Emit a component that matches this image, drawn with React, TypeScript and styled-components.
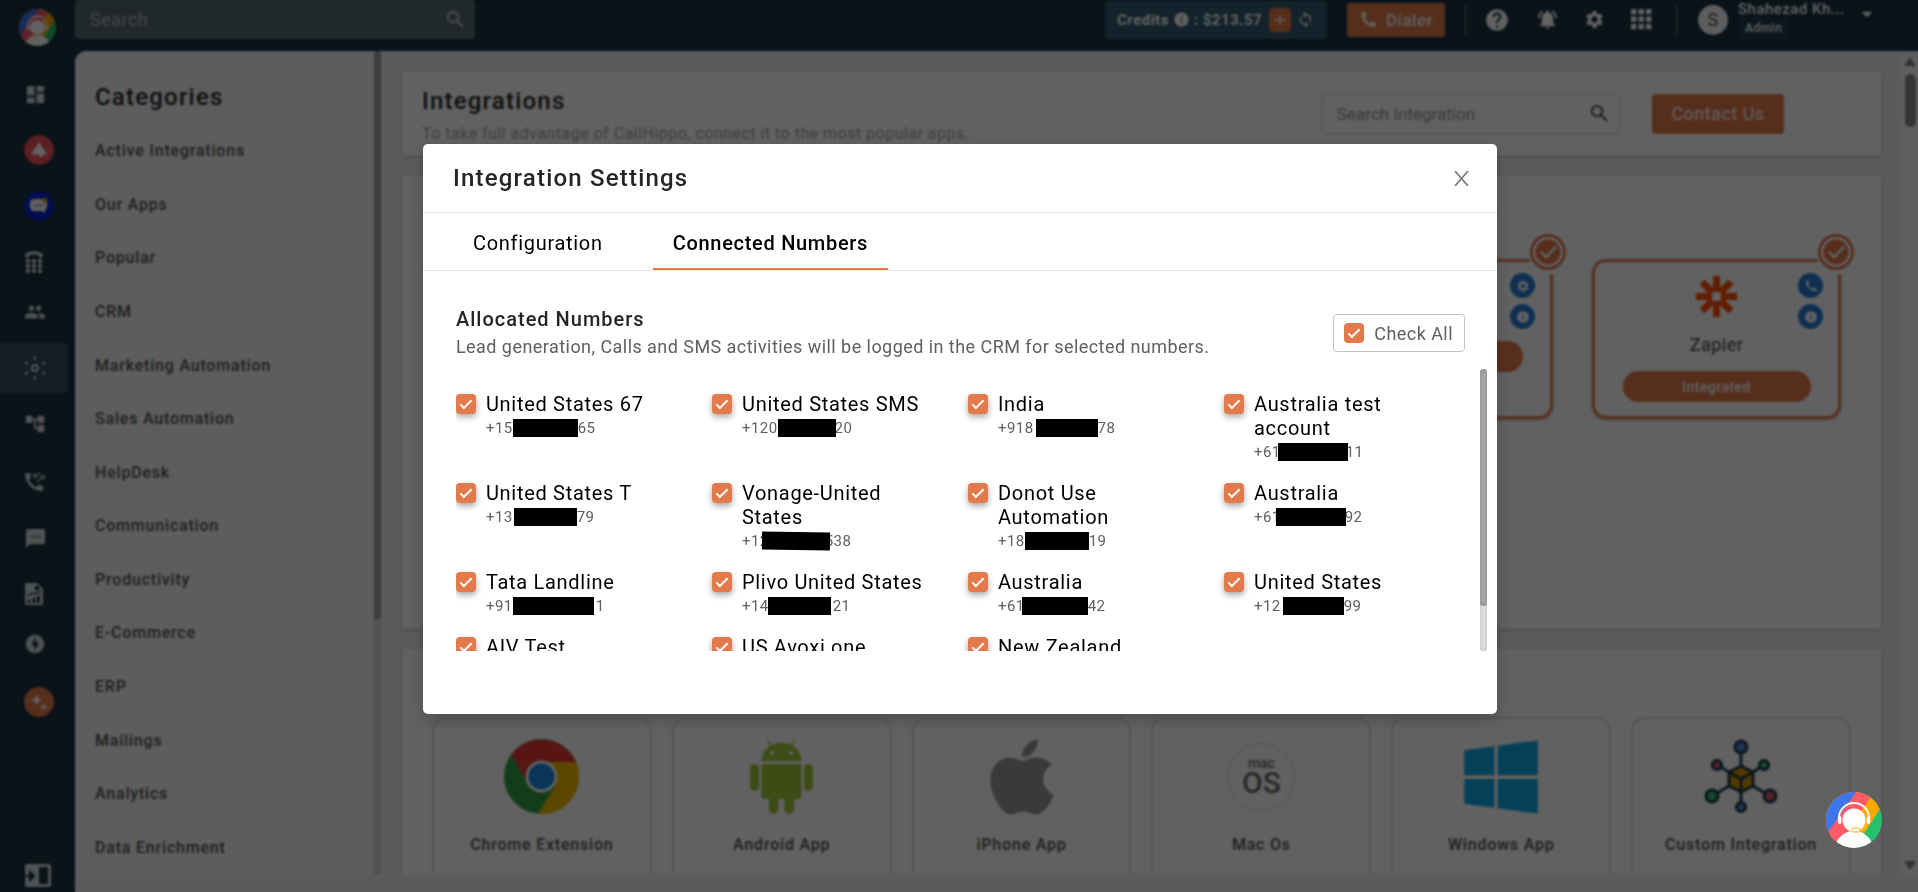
import React from "react";
import styled, { createGlobalStyle, css } from "styled-components";
import {
  MdAccountTree,
  MdAdd,
  MdArrowDropDown,
  MdCall,
  MdDashboard,
  MdGroup,
  MdHelp,
  MdInfo,
  MdLoop,
  MdNotificationsActive,
  MdOfflineBolt,
  MdSearch,
  MdSettings,
  MdSms,
} from "react-icons/md";
import { FaApple, FaWindows } from "react-icons/fa";

const color = {
  navy: "#1a323f",
  orange: "#e37a4b",
  line: "#e5e5e5",
  ink: "#252525",
  muted: "#5f5f5f",
};

const tracking = { body: "0.03em", wide: "0.05em" };

const GlobalStyle = createGlobalStyle`
  *, *::before, *::after { box-sizing: border-box; }
  body {
    margin: 0;
    overflow: hidden;
    background: ${color.navy};
    font-family: Roboto, "Liberation Sans", sans-serif;
    letter-spacing: ${tracking.body};
  }
  button, input { font: inherit; letter-spacing: inherit; }
  h1, h2, h3, p, ul { margin: 0; padding: 0; }
  a { color: inherit; text-decoration: none; }
`;

/* ---------- Page shell ---------- */

const Shell = styled.div`
  display: flex;
  height: 100vh;
  overflow: hidden;
  background: ${color.navy};
`;

const Rail = styled.nav`
  display: flex;
  flex-direction: column;
  flex: 0 0 75px;
  padding: 9px 0 4px;
  color: #d4d8da;
`;

const RailLogo = styled.a`
  display: flex;
  height: 60px;
  padding-left: 19px;
`;

const RailLink = styled.a<{ $gap?: number; $active?: boolean }>`
  display: flex;
  align-items: center;
  flex: 0 0 50px;
  width: 68px;
  margin-top: ${(p) => p.$gap ?? 6}px;
  padding-left: 24px;
  background: ${(p) => (p.$active ? "#374f63" : "transparent")};
`;

const RailDisc = styled.span<{ $fill: string }>`
  display: flex;
  align-items: center;
  justify-content: center;
  width: 30px;
  height: 30px;
  border-radius: 50%;
  background: ${(p) => p.$fill};
  color: #fff;
`;

const RailToggle = styled.button`
  display: flex;
  margin-top: auto;
  padding: 0 0 0 24px;
  border: 0;
  background: none;
`;

const Workspace = styled.div`
  display: flex;
  flex-direction: column;
  flex: 1;
  min-width: 0;
`;

/* ---------- Top bar ---------- */

const TopBar = styled.header`
  display: flex;
  align-items: center;
  flex: 0 0 51px;
  padding: 0 38px 12px 0;
  color: #fff;
`;

const SearchField = styled.label<{ $light?: boolean }>`
  display: flex;
  align-items: center;
  justify-content: space-between;
  border-radius: 4px;
  ${(p) =>
    p.$light
      ? css`
          width: 298px;
          height: 40px;
          padding: 0 8px 0 14px;
          border: 1px solid #d9d9d9;
          background: #fff;
          color: #444;
          font-size: 17px;
          letter-spacing: 0;
        `
      : css`
          width: 400px;
          height: 39px;
          padding: 0 8px 0 15px;
          background: #586a72;
          color: #d0d4d6;
          font-size: 18px;
        `}
  input {
    flex: 1;
    min-width: 0;
    padding: 0;
    border: 0;
    outline: 0;
    background: none;
    color: inherit;
  }
  input::placeholder {
    color: ${(p) => (p.$light ? "#999" : "#b4bcc0")};
    opacity: 1;
  }
`;

const Credits = styled.div`
  display: flex;
  align-items: center;
  gap: 4px;
  width: 222px;
  height: 38px;
  margin-left: auto;
  padding: 0 12px;
  border-radius: 4px;
  background: #325971;
  font-size: 15px;
  font-weight: 700;
  white-space: nowrap;
`;

const CreditAction = styled.button<{ $filled?: boolean }>`
  display: flex;
  align-items: center;
  justify-content: center;
  width: ${(p) => (p.$filled ? 22 : 20)}px;
  height: 24px;
  margin-left: ${(p) => (p.$filled ? "auto" : "0")};
  padding: 0;
  border: 0;
  border-radius: 4px;
  background: ${(p) => (p.$filled ? color.orange : "none")};
  color: #fff;
`;

const PrimaryButton = styled.button<{ $large?: boolean }>`
  display: flex;
  align-items: center;
  justify-content: center;
  gap: 8px;
  width: ${(p) => (p.$large ? 132 : 98)}px;
  height: ${(p) => (p.$large ? 40 : 34)}px;
  padding: 0;
  border: 0;
  border-radius: 4px;
  background: ${color.orange};
  color: #fff;
  font-size: ${(p) => (p.$large ? 18 : 17)}px;
  font-weight: ${(p) => (p.$large ? 400 : 500)};
`;

const TopActions = styled.div`
  display: flex;
  align-items: center;
  margin-left: 20px;
`;

const TopDivider = styled.span`
  width: 1px;
  height: 29px;
  background: #7e8b92;
`;

const TopIcons = styled.div`
  display: flex;
  align-items: center;
  justify-content: space-between;
  width: 168px;
  margin: 0 24px 0 18px;
`;

const IconButton = styled.button`
  display: flex;
  padding: 0;
  border: 0;
  background: none;
  color: inherit;
`;

const Avatar = styled.span`
  display: flex;
  align-items: center;
  justify-content: center;
  width: 30px;
  height: 30px;
  margin: 0 10px 0 21px;
  border-radius: 50%;
  background: #f5f5f5;
  color: #555;
  font-size: 18px;
`;

const UserBlock = styled.div`
  display: flex;
  flex-direction: column;
  align-items: flex-start;
  width: 116px;
  font-size: 15px;
  font-weight: 500;
  line-height: 16px;
`;

const Role = styled.span`
  padding: 3px 7px;
  border-radius: 4px;
  background: #223c49;
  font-size: 12px;
`;

const UserCaret = styled.span`
  display: flex;
  align-self: flex-start;
`;

/* ---------- Body ---------- */

const Body = styled.div`
  display: flex;
  flex: 1;
  min-height: 0;
  border-bottom: 18px solid #f0f0f3;
  border-top-left-radius: 12px;
  background: #f0f0f0;
  overflow: hidden;
`;

const Categories = styled.aside`
  display: flex;
  flex-direction: column;
  flex: 0 0 299px;
  padding: 28px 0 0 20px;
  background: #f5f5f5;
`;

const PanelTitle = styled.h2`
  color: ${color.ink};
  font-size: 24px;
  font-weight: 500;
  line-height: 36px;
  letter-spacing: ${tracking.wide};
`;

const CategoryList = styled.ul`
  display: flex;
  flex: 1;
  flex-direction: column;
  margin-top: 9px;
  list-style: none;
  color: #505050;
  font-size: 16px;
  font-weight: 500;
  letter-spacing: ${tracking.wide};
`;

const CategoryItem = styled.li`
  display: flex;
  flex: 1;
  align-items: center;
`;

const ScrollRail = styled.div<{ $dark?: boolean }>`
  flex: 0 0 7px;
  border-radius: 4px;
  background: ${(p) => (p.$dark ? "#d8d8d8" : "#dedede")};
  box-shadow: inset 0 0 3px #b8b8b8;
`;

const ScrollThumb = styled.div<{ $share: number }>`
  height: ${(p) => p.$share}%;
  border-radius: 4px;
  background: #ababab;
  box-shadow: inset 0 0 4px #808080;
`;

const Main = styled.main`
  display: flex;
  flex: 1;
  flex-direction: column;
  gap: 20px;
  min-width: 0;
  padding: 20px 19px 0 21px;
  overflow: hidden;
`;

const Card = styled.section`
  flex: none;
  background: #fff;
  box-shadow: 0 1px 4px #bbb;
`;

const IntroCard = styled(Card)`
  display: flex;
  align-items: center;
  height: 85px;
  padding: 0 97px 0 20px;
`;

const Intro = styled.div`
  flex: 1;
  padding-top: 4px;
  color: #a5a5a5;
  font-size: 16px;
  line-height: 30px;
`;

const IntroActions = styled.div`
  display: flex;
  gap: 32px;
`;

const ActiveCard = styled(Card)`
  display: flex;
  justify-content: flex-end;
  gap: 39px;
  height: 453px;
  padding: 83px 40px 0;
`;

const ActiveApp = styled.article`
  position: relative;
  display: flex;
  flex-direction: column;
  align-items: center;
  flex: 0 0 249px;
  height: 160px;
  padding-top: 14px;
  border: 3px solid ${color.orange};
  border-radius: 14px;
  color: #454545;
  font-size: 18px;
  line-height: 30px;
  box-shadow: 0 1px 3px #aaa;
`;

const AppGlyph = styled.span`
  display: flex;
  height: 41px;
  margin-bottom: 13px;
`;

const IntegratedButton = styled.button`
  width: 188px;
  height: 31px;
  margin-top: 11px;
  padding: 0;
  border: 0;
  border-radius: 16px;
  background: ${color.orange};
  color: #fff;
  font-size: 14px;
  font-weight: 500;
`;

const CheckBadge = styled.span`
  position: absolute;
  top: -28px;
  right: -16px;
  display: flex;
  padding: 0 0 5px 1px;
  border-radius: 50%;
  background: #fff;
`;

const RoundActions = styled.span`
  position: absolute;
  top: 11px;
  right: 15px;
  display: grid;
  gap: 6px;
`;

const RoundAction = styled.button`
  display: flex;
  align-items: center;
  justify-content: center;
  width: 25px;
  height: 25px;
  padding: 0;
  border: 0;
  border-radius: 50%;
  background: #257dd8;
  color: #fff;
`;

const AppsCard = styled(Card)`
  flex: 1;
  display: grid;
  grid-template-columns: repeat(6, 1fr);
  gap: 20px;
  padding: 68px 30px 0;
`;

const AppTile = styled.article`
  display: flex;
  flex-direction: column;
  align-items: center;
  height: 180px;
  padding-top: 20px;
  border: 2px solid #dcdcdc;
  border-radius: 14px;
  color: #505050;
  font-size: 16px;
  font-weight: 500;
  line-height: 22px;
  letter-spacing: ${tracking.wide};
`;

const TileGlyph = styled.span`
  display: flex;
  align-items: center;
  justify-content: center;
  height: 75px;
  margin-bottom: 20px;
`;

const MacBadge = styled.span`
  display: flex;
  flex-direction: column;
  align-items: center;
  justify-content: center;
  width: 68px;
  height: 68px;
  border: 1px solid #d2d2d2;
  border-radius: 50%;
  color: #6a6a6a;
  font-size: 14px;
  font-weight: 500;
  line-height: 12px;
  letter-spacing: 0;
`;

const MacBadgeLarge = styled.span`
  font-size: 30px;
  line-height: 27px;
`;

const PageScroll = styled.div`
  display: flex;
  flex-direction: column;
  align-items: center;
  flex: 0 0 18px;
  padding: 6px 0 4px 2px;
  background: #f8f8f8;
`;

const PageThumb = styled.span`
  width: 11px;
  height: 53px;
  margin: 8px 0 auto;
  border-radius: 6px;
  background: #8b8b8b;
`;

/* ---------- Dialog ---------- */

const Overlay = styled.div`
  position: fixed;
  inset: 0;
  display: flex;
  align-items: flex-start;
  justify-content: center;
  padding: 144px 0 0 2px;
  background: rgba(0, 0, 0, 0.62);
  backdrop-filter: blur(1px);
`;

const Dialog = styled.section`
  width: 56vw;
  padding-bottom: 63px;
  border-radius: 5px;
  background: #fff;
  box-shadow: 0 6px 16px rgba(0, 0, 0, 0.2);
`;

const DialogHeader = styled.div`
  display: flex;
  align-items: center;
  justify-content: space-between;
  height: 69px;
  padding: 0 28px 0 30px;
  border-bottom: 1px solid ${color.line};
`;

const TabList = styled.div`
  display: flex;
  gap: 30px;
  height: 58px;
  padding: 0 30px;
  border-bottom: 1px solid ${color.line};
`;

const Tab = styled.button<{ $selected?: boolean }>`
  padding: 4px 20px 0;
  border: 0;
  border-bottom: 2px solid ${(p) => (p.$selected ? color.orange : "transparent")};
  background: none;
  color: #000;
  font-size: 20px;
  font-weight: ${(p) => (p.$selected ? 500 : 400)};
  letter-spacing: 0.035em;
`;

const PanelHead = styled.div`
  display: flex;
  align-items: center;
  justify-content: space-between;
  padding: 34px 32px 8px 33px;
`;

const PanelHeading = styled.h3`
  color: ${color.ink};
  font-size: 20px;
  font-weight: 500;
  line-height: 28px;
  letter-spacing: ${tracking.wide};
`;

const PanelText = styled.p`
  color: ${color.muted};
  font-size: 18px;
  line-height: 28px;
  letter-spacing: 0.025em;
`;

const CheckAll = styled.label`
  display: flex;
  align-items: center;
  gap: 10px;
  height: 38px;
  padding: 0 11px 0 10px;
  border: 1px solid #c4c4c4;
  border-radius: 4px;
  color: ${color.muted};
  font-size: 18px;
  letter-spacing: 0.025em;
`;

const Check = styled.input<{ $raised?: boolean }>`
  appearance: none;
  display: flex;
  justify-content: center;
  flex: none;
  width: 20px;
  height: 20px;
  margin: 0;
  border-radius: 4px;
  background: #ddd;
  box-shadow: ${(p) => (p.$raised ? "0 3px 6px rgba(0, 0, 0, 0.35)" : "none")};
  &:checked {
    background: ${color.orange};
  }
  &:checked::after {
    content: "";
    width: 6px;
    height: 12px;
    margin-top: 3px;
    border: solid #fff;
    border-width: 0 2px 2px 0;
    transform: rotate(45deg);
  }
`;

const ListFrame = styled.div`
  display: flex;
  height: 282px;
  padding: 0 10px 0 33px;
`;

const NumberGrid = styled.div`
  display: grid;
  flex: 1;
  grid-template-columns: repeat(4, 1fr);
  align-content: start;
  row-gap: 17px;
  padding-top: 23px;
  overflow: hidden;
`;

const NumberItem = styled.label`
  display: flex;
  align-items: flex-start;
  gap: 10px;
  padding-right: 36px;
  color: #000;
  font-size: 20px;
  line-height: 24px;
  letter-spacing: 0.035em;
  ${Check} {
    margin-top: 2px;
  }
`;

const Phone = styled.span`
  display: flex;
  align-items: center;
  color: ${color.muted};
  font-size: 15px;
  letter-spacing: ${tracking.body};
  white-space: nowrap;
`;

const Redaction = styled.span<{ $width: number; $start: number; $end: number; $tilt: number }>`
  z-index: 1;
  width: ${(p) => p.$width}px;
  height: 18px;
  margin: 0 ${(p) => p.$end}px 0 ${(p) => p.$start}px;
  background: #000;
  transform: rotate(${(p) => p.$tilt}deg);
`;

const HelpWidget = styled.button`
  position: fixed;
  right: 36px;
  bottom: 44px;
  display: flex;
  padding: 0;
  border: 0;
  background: none;
`;

/* ---------- Drawings ---------- */

const AgentLogo = ({ size, id }: { size: number; id: string }) => (
  <svg width={size} height={size} viewBox="0 0 56 56" aria-hidden="true">
    <defs>
      <clipPath id={id}>
        <circle cx="28" cy="28" r="28" />
      </clipPath>
    </defs>
    <g clipPath={`url(#${id})`}>
      <rect width="56" height="56" fill="#25c16f" />
      <path d="M0 0H65L26 60H0Z" fill="#ffa800" />
      <path d="M0 0H48L8 60H0Z" fill="#ff5a68" />
      <path d="M0 0H30L0 43Z" fill="#3b76ea" />
      <path d="M13 26a15 15 0 0 1 30 0" fill="none" stroke="#fff" strokeWidth="2" />
      <path d="M40 20a13 13 0 0 1-7 19" fill="none" stroke="#ffb52e" strokeWidth="2" />
      <circle cx="28" cy="28" r="11.5" fill="#fff" />
      <rect x="12" y="24" width="3.4" height="8" rx="1.7" fill="#fff" />
      <rect x="40.8" y="24" width="3.4" height="8" rx="1.7" fill="#fff" />
      <path d="M8 54C14 42 21 39 28 39s14 3 20 15v4H8Z" fill="#fff" />
      <rect x="26" y="36" width="8" height="4" rx="1.6" fill="#fff" stroke="#ffa800" strokeWidth="1" />
    </g>
  </svg>
);

const DialpadIcon = () => (
  <svg width="20" height="24" viewBox="0 0 20 24" fill="currentColor" aria-hidden="true">
    <path d="M1 7V5C3 0 17 0 19 5v2l-4 1V5.5C12 4 8 4 5 5.5V8Z" />
    {[2, 8, 14].map((x) =>
      [9, 14, 19].map((y) => <rect key={`${x}-${y}`} x={x} y={y} width="4" height="4" rx="1" />)
    )}
  </svg>
);

const HubIcon = () => (
  <svg width="22" height="24" viewBox="0 0 22 24" fill="currentColor" aria-hidden="true">
    <circle cx="11" cy="12" r="3" fill="none" stroke="currentColor" strokeWidth="2" />
    {[[11, 2], [11, 22], [2.5, 7], [19.5, 7], [2.5, 17], [19.5, 17]].map(([x, y]) => (
      <circle key={`${x}-${y}`} cx={x} cy={y} r="1.6" />
    ))}
  </svg>
);

const CallLogIcon = () => (
  <svg width="22" height="22" viewBox="0 0 22 22" aria-hidden="true">
    <path
      d="M1 3C1 12 9 20 18 20a1 1 0 0 0 1-1v-3.500a1 1 0 0 0-1-1l-3.500-.6-2.500 2C9 14.500 6.500 12 5 9l2-2.500L6.500 3a1 1 0 0 0-1-1H2a1 1 0 0 0-1 1Z"
      fill="currentColor"
    />
    <path d="M16 1l-6 5M10 2v4h4M13 11l7-6M16 5h4v4" fill="none" stroke="currentColor" strokeWidth="1.2" />
  </svg>
);

const ReportIcon = () => (
  <svg width="20" height="24" viewBox="0 0 20 24" aria-hidden="true">
    <path d="M3 1h10l6 6v14a2 2 0 0 1-2 2H3a2 2 0 0 1-2-2V3a2 2 0 0 1 2-2Z" fill="currentColor" />
    <circle cx="13" cy="6" r="2.5" fill={color.navy} />
    <path d="M5 18v3M10 16v5M14.500 14v7" stroke={color.navy} strokeWidth="3" />
    <path d="M4 14l4-3 4 1 5-3" fill="none" stroke={color.navy} strokeWidth="1.4" />
  </svg>
);

const SidebarIcon = () => (
  <svg width="28" height="24" viewBox="0 0 28 24" aria-hidden="true">
    <rect x="1" width="26" height="23" rx="2" fill="#d4d8da" />
    <rect x="15" y="3" width="9" height="17" fill={color.navy} />
    <path d="M0 12h9M6 8l4 4-4 4Z" stroke={color.navy} strokeWidth="2" fill={color.navy} />
  </svg>
);

const BellServiceIcon = () => (
  <svg width="16" height="16" viewBox="0 0 16 16" fill="currentColor" aria-hidden="true">
    <circle cx="8" cy="2.500" r="1.8" />
    <path d="M8 3c4 1 5 5 6.500 7.500 1 .5 1.500 1 1.500 2H0c0-1 .5-1.500 1.500-2C3 8 4 4 8 3Z" />
    <circle cx="10" cy="13.500" r="1.800" />
  </svg>
);

const ChatIcon = () => (
  <svg width="18" height="16" viewBox="0 0 18 16" aria-hidden="true">
    <path d="M5 1h8c3 0 4 2 4 5s0 5-2 6v3l-4-2H5c-4 0-5-2-5-6s1-6 5-6Z" fill="#fff" />
    <path d="M5 7.500h.5M8.500 7.500h.5M12 7.500h.5" stroke="#1a34d8" strokeWidth="1.6" strokeLinecap="round" />
    <circle cx="15" cy="2.500" r="2.500" fill="#f5a623" />
  </svg>
);

const SparkleIcon = () => (
  <svg width="18" height="18" viewBox="0 0 18 18" fill="currentColor" aria-hidden="true">
    <path d="M6.500 1L8 5.500l4.500 1.500L8 8.500 6.500 13 5 8.500.5 7 5 5.500Z" />
    <path d="M13.500 10l1 3 3 1-3 1-1 3-1-3-3-1 3-1Z" />
  </svg>
);

const AppsGridIcon = () => (
  <svg width="21" height="21" viewBox="0 0 21 21" fill="currentColor" aria-hidden="true">
    {[0, 7.5, 15].map((x) =>
      [0, 7.5, 15].map((y) => <rect key={`${x}-${y}`} x={x} y={y} width="5.4" height="5.4" />)
    )}
  </svg>
);

const CloseIcon = () => (
  <svg width="15" height="15" viewBox="0 0 15 15" stroke="#757575" strokeWidth="1.6" aria-hidden="true">
    <path d="M1 0l13 15M14 0L1 15" />
  </svg>
);

const Arrow = ({ down }: { down?: boolean }) => (
  <svg width="12" height="9" viewBox="0 0 12 9" fill="#858585" aria-hidden="true">
    <path d={down ? "M0 0h12L6 9Z" : "M0 9h12L6 0Z"} />
  </svg>
);

const ZapierIcon = () => (
  <svg width="41" height="41" viewBox="0 0 41 41" aria-hidden="true">
    <g stroke="#ff4f00" strokeWidth="7">
      <path d="M20.500 0v41M0 20.500h41M6 6l29 29M35 6L6 35" />
    </g>
    <rect x="14" y="14" width="13" height="13" rx="2" fill="#ff4f00" />
    <rect x="16" y="16" width="9" height="9" rx="2" fill="#fff" />
  </svg>
);

const IntegratedMark = () => (
  <svg width="36" height="36" viewBox="0 0 36 36" aria-hidden="true">
    <circle cx="18" cy="18" r="16.5" fill="#fff" stroke={color.orange} strokeWidth="3" />
    <circle cx="18" cy="18" r="12.5" fill={color.orange} />
    <path d="M11 18l5 5 10-10" fill="none" stroke="#fff" strokeWidth="2.6" />
  </svg>
);

const ChromeIcon = () => (
  <svg width="75" height="75" viewBox="0 0 75 75" aria-hidden="true">
    <circle cx="37.5" cy="37.5" r="37.5" fill="#34a045" />
    <path d="M72 23H37.500L52 46 34 75A37.500 37.500 0 0 0 72 23Z" fill="#f5b800" />
    <path d="M7.500 15.500A37.500 37.500 0 0 1 72 23H37.500L23 43Z" fill="#e53935" />
    <circle cx="37.5" cy="37.5" r="16" fill="#fff" />
    <circle cx="37.5" cy="37.5" r="13" fill="#1e88e5" />
  </svg>
);

const AndroidIcon = () => (
  <svg width="63" height="75" viewBox="0 0 63 75" fill="#a4c639" aria-hidden="true">
    <path d="M11.500 22C12 10 21 4 31.500 4S51 10 51.500 22Z" />
    <path d="M22 8l-4-7M41 8l4-7" stroke="#a4c639" strokeWidth="1.6" />
    <circle cx="22" cy="14" r="2" fill="#fff" />
    <circle cx="41" cy="14" r="2" fill="#fff" />
    <path d="M11.500 25h40v32a3 3 0 0 1-3 3h-34a3 3 0 0 1-3-3Z" />
    <rect y="25" width="9" height="27" rx="4.5" />
    <rect x="54" y="25" width="9" height="27" rx="4.5" />
    <rect x="19" y="50" width="9.5" height="25" rx="4.7" />
    <rect x="34.5" y="50" width="9.5" height="25" rx="4.7" />
  </svg>
);

const hubNodes = [
  { x: 37, y: 8, r: 6, fill: "#5b86d8", from: [37, 27] },
  { x: 13, y: 26, r: 4.6, fill: "#d85a6c", from: [25, 33] },
  { x: 60, y: 26, r: 4.6, fill: "#3fb87a", from: [49, 33] },
  { x: 8, y: 57, r: 6, fill: "#3fb87a", from: [25, 47] },
  { x: 66, y: 57, r: 6, fill: "#d85a6c", from: [49, 47] },
  { x: 37, y: 68, r: 4.6, fill: "#5b86d8", from: [37, 53] },
];

const CustomIntegrationIcon = () => (
  <svg width="75" height="75" viewBox="0 0 75 75" stroke="#1c3a4d" strokeWidth="3" aria-hidden="true">
    {hubNodes.map((n) => (
      <g key={`${n.x}-${n.y}`}>
        <path d={`M${n.from[0]} ${n.from[1]}L${n.x} ${n.y}`} />
        <circle cx={n.x} cy={n.y} r={n.r} fill={n.fill} />
      </g>
    ))}
    <path d="M37 27l12 6v14l-12 6-12-6V33Z" fill="#d89600" strokeLinejoin="round" />
    <path d="M25 33l12 7 12-7M37 40v13" fill="none" />
  </svg>
);

/* ---------- Data ---------- */

const categories = [
  "Active Integrations",
  "Our Apps",
  "Popular",
  "CRM",
  "Marketing Automation",
  "Sales Automation",
  "HelpDesk",
  "Communication",
  "Productivity",
  "E-Commerce",
  "ERP",
  "Mailings",
  "Analytics",
  "Data Enrichment",
];

type Line = {
  name: string;
  head?: string;
  tail?: string;
  bar?: number;
  start?: number;
  end?: number;
  tilt?: number;
};

const lines: Line[] = [
  { name: "United States 67", head: "+15", tail: "65", bar: 65 },
  { name: "United States SMS", head: "+120", tail: "20", bar: 58, end: -1 },
  { name: "India", head: "+918", tail: "78", bar: 62, start: 2 },
  { name: "Australia test account", head: "+61", tail: "11", bar: 70, start: -3, end: -2 },
  { name: "United States T", head: "+13", tail: "79", bar: 63, start: 1 },
  { name: "Vonage-United States", head: "+12", tail: "538", bar: 68, start: -7, end: -5, tilt: 1 },
  { name: "Donot Use Automation", head: "+18", tail: "19", bar: 64 },
  { name: "Australia", head: "+61", tail: "92", bar: 70, start: -5, end: -1 },
  { name: "Tata Landline", head: "+91", tail: "1", bar: 81, end: 2 },
  { name: "Plivo United States", head: "+14", tail: "21", bar: 63, start: -1, end: 2 },
  { name: "Australia", head: "+61", tail: "42", bar: 66, start: -3 },
  { name: "United States", head: "+12", tail: "99", bar: 61, start: 2 },
  { name: "AIV Test" },
  { name: "US Avoxi one" },
  { name: "New Zealand" },
];

const apps = [
  { name: "Chrome Extension", glyph: <ChromeIcon /> },
  { name: "Android App", glyph: <AndroidIcon /> },
  { name: "iPhone App", glyph: <FaApple size={86} color="#999" /> },
  {
    name: "Mac Os",
    glyph: (
      <MacBadge>
        mac
        <MacBadgeLarge>OS</MacBadgeLarge>
      </MacBadge>
    ),
  },
  { name: "Windows App", glyph: <FaWindows size={84} color="#0da8e7" /> },
  { name: "Custom Integration", glyph: <CustomIntegrationIcon /> },
];

/* ---------- Views ---------- */

const SideRail = () => (
  <Rail aria-label="Main">
    <RailLogo href="#home" aria-label="Home">
      <AgentLogo size={37} id="rail-logo" />
    </RailLogo>
    <RailLink href="#dashboard" aria-label="Dashboard" $gap={0}><MdDashboard size={23} /></RailLink>
    <RailLink href="#alerts" aria-label="Alerts"><RailDisc $fill="#f0525f"><BellServiceIcon /></RailDisc></RailLink>
    <RailLink href="#chat" aria-label="Chat"><RailDisc $fill="#0a22d0"><ChatIcon /></RailDisc></RailLink>
    <RailLink href="#dialpad" aria-label="Numbers"><DialpadIcon /></RailLink>
    <RailLink href="#people" aria-label="Users" $gap={0}><MdGroup size={22} /></RailLink>
    <RailLink href="#integrations" aria-label="Integrations" $active><HubIcon /></RailLink>
    <RailLink href="#flows" aria-label="Flows"><MdAccountTree size={22} /></RailLink>
    <RailLink href="#calls" aria-label="Call log" $gap={8}><CallLogIcon /></RailLink>
    <RailLink href="#sms" aria-label="Messages"><MdSms size={23} /></RailLink>
    <RailLink href="#reports" aria-label="Reports"><ReportIcon /></RailLink>
    <RailLink href="#power" aria-label="Power dialer" $gap={0}><MdOfflineBolt size={22} /></RailLink>
    <RailLink href="#ai" aria-label="AI" $gap={8}><RailDisc $fill={color.orange}><SparkleIcon /></RailDisc></RailLink>
    <RailToggle aria-label="Expand sidebar"><SidebarIcon /></RailToggle>
  </Rail>
);

const Top = () => (
  <TopBar>
    <SearchField>
      <input type="search" placeholder="Search" aria-label="Search" />
      <MdSearch size={23} />
    </SearchField>
    <Credits>
      Credits <MdInfo size={17} /> : $213.57
      <CreditAction $filled aria-label="Add credits"><MdAdd size={18} /></CreditAction>
      <CreditAction aria-label="Refresh credits"><MdLoop size={17} /></CreditAction>
    </Credits>
    <TopActions>
      <PrimaryButton><MdCall size={19} />Dialer</PrimaryButton>
    </TopActions>
    <TopActions>
      <TopDivider />
      <TopIcons>
        <IconButton aria-label="Help"><MdHelp size={26} /></IconButton>
        <IconButton aria-label="Notifications"><MdNotificationsActive size={23} /></IconButton>
        <IconButton aria-label="Settings"><MdSettings size={21} /></IconButton>
        <IconButton aria-label="Apps"><AppsGridIcon /></IconButton>
      </TopIcons>
      <TopDivider />
      <Avatar>S</Avatar>
      <UserBlock>
        Shahezad Kh...
        <Role>Admin</Role>
      </UserBlock>
      <UserCaret><MdArrowDropDown size={26} /></UserCaret>
    </TopActions>
  </TopBar>
);

const ActiveTile = ({ name, glyph, action }: { name?: string; glyph?: React.ReactNode; action: React.ReactNode }) => (
  <ActiveApp>
    <AppGlyph>{glyph}</AppGlyph>
    {name}
    <IntegratedButton>Integrated</IntegratedButton>
    <CheckBadge><IntegratedMark /></CheckBadge>
    <RoundActions>
      <RoundAction aria-label="Configure">{action}</RoundAction>
      <RoundAction aria-label="Details"><MdInfo size={14} /></RoundAction>
    </RoundActions>
  </ActiveApp>
);

const SettingsDialog = () => (
  <Overlay>
    <Dialog role="dialog" aria-labelledby="dialog-title">
      <DialogHeader>
        <PanelTitle id="dialog-title">Integration Settings</PanelTitle>
        <IconButton aria-label="Close"><CloseIcon /></IconButton>
      </DialogHeader>
      <TabList role="tablist">
        <Tab role="tab" aria-selected={false}>Configuration</Tab>
        <Tab role="tab" aria-selected $selected>Connected Numbers</Tab>
      </TabList>
      <PanelHead>
        <div>
          <PanelHeading>Allocated Numbers</PanelHeading>
          <PanelText>Lead generation, Calls and SMS activities will be logged in the CRM for selected numbers.</PanelText>
        </div>
        <CheckAll>
          <Check type="checkbox" defaultChecked />
          Check All
        </CheckAll>
      </PanelHead>
      <ListFrame>
        <NumberGrid>
          {lines.map((line, i) => (
            <NumberItem key={i}>
              <Check type="checkbox" defaultChecked $raised />
              <span>
                {line.name}
                {line.head && (
                  <Phone>
                    {line.head}
                    <Redaction
                      $width={line.bar ?? 64}
                      $start={line.start ?? 0}
                      $end={line.end ?? 0}
                      $tilt={line.tilt ?? 0}
                    />
                    {line.tail}
                  </Phone>
                )}
              </span>
            </NumberItem>
          ))}
        </NumberGrid>
        <ScrollRail>
          <ScrollThumb $share={84} />
        </ScrollRail>
      </ListFrame>
    </Dialog>
  </Overlay>
);

export default function App() {
  return (
    <>
      <GlobalStyle />
      <Shell>
        <SideRail />
        <Workspace>
          <Top />
          <Body>
            <Categories>
              <PanelTitle>Categories</PanelTitle>
              <CategoryList>
                {categories.map((name) => (
                  <CategoryItem key={name}><a href="#category">{name}</a></CategoryItem>
                ))}
              </CategoryList>
            </Categories>
            <ScrollRail $dark>
              <ScrollThumb $share={69} />
            </ScrollRail>
            <Main>
              <IntroCard>
                <Intro>
                  <PanelTitle as="h1">Integrations</PanelTitle>
                  <p>To take full advantage of CallHippo, connect it to the most popular apps.</p>
                </Intro>
                <IntroActions>
                  <SearchField $light>
                    <input type="search" placeholder="Search Integration" aria-label="Search Integration" />
                    <MdSearch size={23} />
                  </SearchField>
                  <PrimaryButton $large>Contact Us</PrimaryButton>
                </IntroActions>
              </IntroCard>
              <ActiveCard>
                <ActiveTile action={<MdSettings size={14} />} />
                <ActiveTile name="Zapier" glyph={<ZapierIcon />} action={<MdCall size={14} />} />
              </ActiveCard>
              <AppsCard>
                {apps.map((app) => (
                  <AppTile key={app.name}>
                    <TileGlyph>{app.glyph}</TileGlyph>
                    {app.name}
                  </AppTile>
                ))}
              </AppsCard>
            </Main>
            <PageScroll>
              <Arrow />
              <PageThumb />
              <Arrow down />
            </PageScroll>
          </Body>
        </Workspace>
      </Shell>
      <SettingsDialog />
      <HelpWidget aria-label="Open support chat">
        <AgentLogo size={56} id="widget-logo" />
      </HelpWidget>
    </>
  );
}
